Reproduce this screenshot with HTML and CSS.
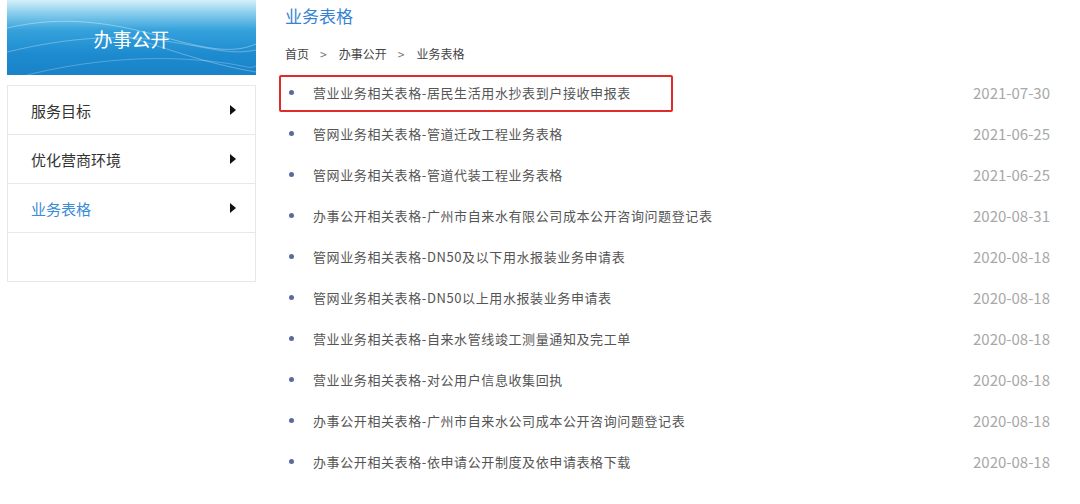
FILE: index.html
```html
<!DOCTYPE html>
<html lang="zh-CN">
<head>
    <meta charset="UTF-8">
    <title>业务表格</title>
    <link rel="stylesheet" href="styles.css">
</head>
<body>
    <div class="page">
        <div class="sidebar">
            <div class="banner">
                <svg class="waves" width="249" height="75" viewBox="0 0 249 75">
                    <path d="M0 28 C60 14 110 24 160 38 S230 52 249 44" stroke="rgba(255,255,255,0.35)" stroke-width="1" fill="none"/>
                    <path d="M0 52 C50 40 100 34 150 40 S220 56 249 50" stroke="rgba(255,255,255,0.3)" stroke-width="1" fill="none"/>
                    <path d="M20 75 C80 60 140 56 190 60 S240 70 249 66" stroke="rgba(255,255,255,0.25)" stroke-width="1" fill="none"/>
                    <path d="M110 34 C150 44 190 62 249 72" stroke="rgba(255,255,255,0.3)" stroke-width="1" fill="none"/>
                </svg>
                <span class="banner-title">办事公开</span>
            </div>
            <ul class="menu">
                <li><span>服务目标</span><i class="arrow"></i></li>
                <li><span>优化营商环境</span><i class="arrow"></i></li>
                <li class="active"><span>业务表格</span><i class="arrow"></i></li>
            </ul>
        </div>

        <div class="main">
            <h2 class="title">业务表格</h2>
            <div class="crumbs">
                <span>首页</span><span class="sep">&gt;</span><span>办事公开</span><span class="sep">&gt;</span><span>业务表格</span>
            </div>
            <ul class="list">
                <li class="marked"><span class="dot"></span><span class="name">营业业务相关表格-居民生活用水抄表到户接收申报表</span><span class="date">2021-07-30</span><span class="mark"></span></li>
                <li><span class="dot"></span><span class="name">管网业务相关表格-管道迁改工程业务表格</span><span class="date">2021-06-25</span></li>
                <li><span class="dot"></span><span class="name">管网业务相关表格-管道代装工程业务表格</span><span class="date">2021-06-25</span></li>
                <li><span class="dot"></span><span class="name">办事公开相关表格-广州市自来水有限公司成本公开咨询问题登记表</span><span class="date">2020-08-31</span></li>
                <li><span class="dot"></span><span class="name">管网业务相关表格-DN50及以下用水报装业务申请表</span><span class="date">2020-08-18</span></li>
                <li><span class="dot"></span><span class="name">管网业务相关表格-DN50以上用水报装业务申请表</span><span class="date">2020-08-18</span></li>
                <li><span class="dot"></span><span class="name">营业业务相关表格-自来水管线竣工测量通知及完工单</span><span class="date">2020-08-18</span></li>
                <li><span class="dot"></span><span class="name">营业业务相关表格-对公用户信息收集回执</span><span class="date">2020-08-18</span></li>
                <li><span class="dot"></span><span class="name">办事公开相关表格-广州市自来水公司成本公开咨询问题登记表</span><span class="date">2020-08-18</span></li>
                <li><span class="dot"></span><span class="name">办事公开相关表格-依申请公开制度及依申请表格下载</span><span class="date">2020-08-18</span></li>
            </ul>
        </div>
    </div>
</body>
</html>
```

FILE: styles.css
```css
body {
    margin: 0;
    background-color: #ffffff;
    font-family: "Noto Sans CJK SC", "Noto Sans", sans-serif;
    color: #333;
}

ul {
    list-style: none;
    margin: 0;
    padding: 0;
}

.page {
    display: flex;
    padding-left: 7px;
}

.sidebar {
    width: 249px;
    flex-shrink: 0;
}

.banner {
    position: relative;
    height: 75px;
    display: flex;
    justify-content: center;
    align-items: center;
    background: linear-gradient(to bottom, #d6f0fa 0%, #8fd0ee 16%, #35a2dc 40%, #1d8bcf 72%, #1a82c8 100%);
    overflow: hidden;
}

.waves {
    position: absolute; /* decoration over the banner */
    top: 0;
    left: 0;
}

.banner-title {
    position: relative;
    color: #ffffff;
    font-size: 19px;
    padding-top: 2px;
}

.menu {
    margin-top: 10px;
    height: 197px;
    border: 1px solid #e8e8e8;
    box-sizing: border-box;
}

.menu li {
    height: 49px;
    box-sizing: border-box;
    border-bottom: 1px solid #e8e8e8;
    display: flex;
    align-items: center;
    justify-content: space-between;
    padding: 0 19px 0 23px;
    font-size: 15px;
    color: #333;
}

.menu li.active {
    color: #3a8bd8;
}

.arrow {
    width: 0;
    height: 0;
    border-top: 5px solid transparent;
    border-bottom: 5px solid transparent;
    border-left: 6px solid #111;
}

.main {
    flex: 1;
    margin-left: 23px;
    padding: 4px 30px 0 0;
}

.title {
    margin: 0 0 0 6px;
    font-size: 17px;
    font-weight: normal;
    line-height: 24px;
    color: #3584d3;
}

.crumbs {
    margin: 16px 0 8px 6px;
    line-height: 20px;
    font-size: 12px;
    color: #444;
}

.crumbs .sep {
    color: #777;
    margin: 0 12px 0 11px;
}

.list li {
    position: relative;
    height: 41px;
    display: flex;
    align-items: center;
    font-size: 13px;
    letter-spacing: 0.6px;
    color: #555;
}

.dot {
    width: 5px;
    height: 5px;
    border-radius: 50%;
    background-color: #5b6a9c;
    margin: 0 19px 0 10px;
    flex-shrink: 0;
}

.name {
    flex: 1;
}

.date {
    font-size: 15px;
    letter-spacing: 0;
    color: #a8a8a8;
}

.mark {
    position: absolute; /* annotation drawn over the first row */
    left: 0;
    top: 3px;
    width: 390px;
    height: 33px;
    border: 2px solid #e02b2b;
    border-radius: 2px;
}
```
